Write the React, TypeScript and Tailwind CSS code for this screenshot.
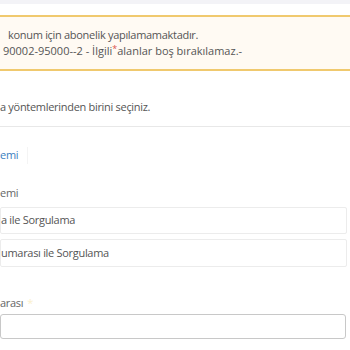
export default function App() {
  return (
    <div className="h-[350px] w-[350px] overflow-hidden bg-white font-['Open_Sans',sans-serif] text-[11px] tracking-[-0.3px] text-[#555]">
      <div className="h-[4px] bg-[#f3f3f7]" />
      <div className="mt-[11px] border-y-2 border-[#f0c96e] bg-[#fffaf3] pt-[10px] pb-[9px] leading-[16px]">
        <div className="whitespace-nowrap pl-[8px]">konum için abonelik yapılamamaktadır.</div>
        <div className="whitespace-nowrap pl-[3px] tracking-normal">
          <span>90002-95000--2 - İlgili</span>
          <span className="relative -top-[3px] text-[9px] text-[#d9534f]">*</span>
          <span>alanlar boş bırakılamaz.-</span>
        </div>
      </div>
      <div className="mt-[28px] whitespace-nowrap leading-[16px]">a yöntemlerinden birini seçiniz.</div>
      <div className="mt-[11px] border-b border-[#e8e8e8]" />
      <div className="mt-[20px] flex h-[17px] items-center">
        <span className="whitespace-nowrap text-[#3b7ec0]">emi</span>
        <span className="ml-[9px] h-[17px] w-px bg-[#f4f4f4]" />
      </div>
      <div className="mt-[21px] whitespace-nowrap leading-[16px] text-[#666]">emi</div>
      <div className="mt-[6px] flex flex-col gap-[5px] pr-[3px]">
        <div className="flex h-[27px] items-center whitespace-nowrap rounded-[2px] border border-[#ececec] bg-white">
          a ile Sorgulama
        </div>
        <div className="flex h-[28px] items-center whitespace-nowrap rounded-[2px] border border-[#ececec] bg-white">
          umarası ile Sorgulama
        </div>
      </div>
      <div className="mt-[28px] flex items-center whitespace-nowrap leading-[16px] text-[#666]">
        <span>arası</span>
        <span className="ml-[4px] text-[#faf0cc]">*</span>
      </div>
      <div className="mt-[3px] mr-[4px] h-[25px] rounded-[3px] border border-[#c8c8c8] bg-white" />
    </div>
  );
}
